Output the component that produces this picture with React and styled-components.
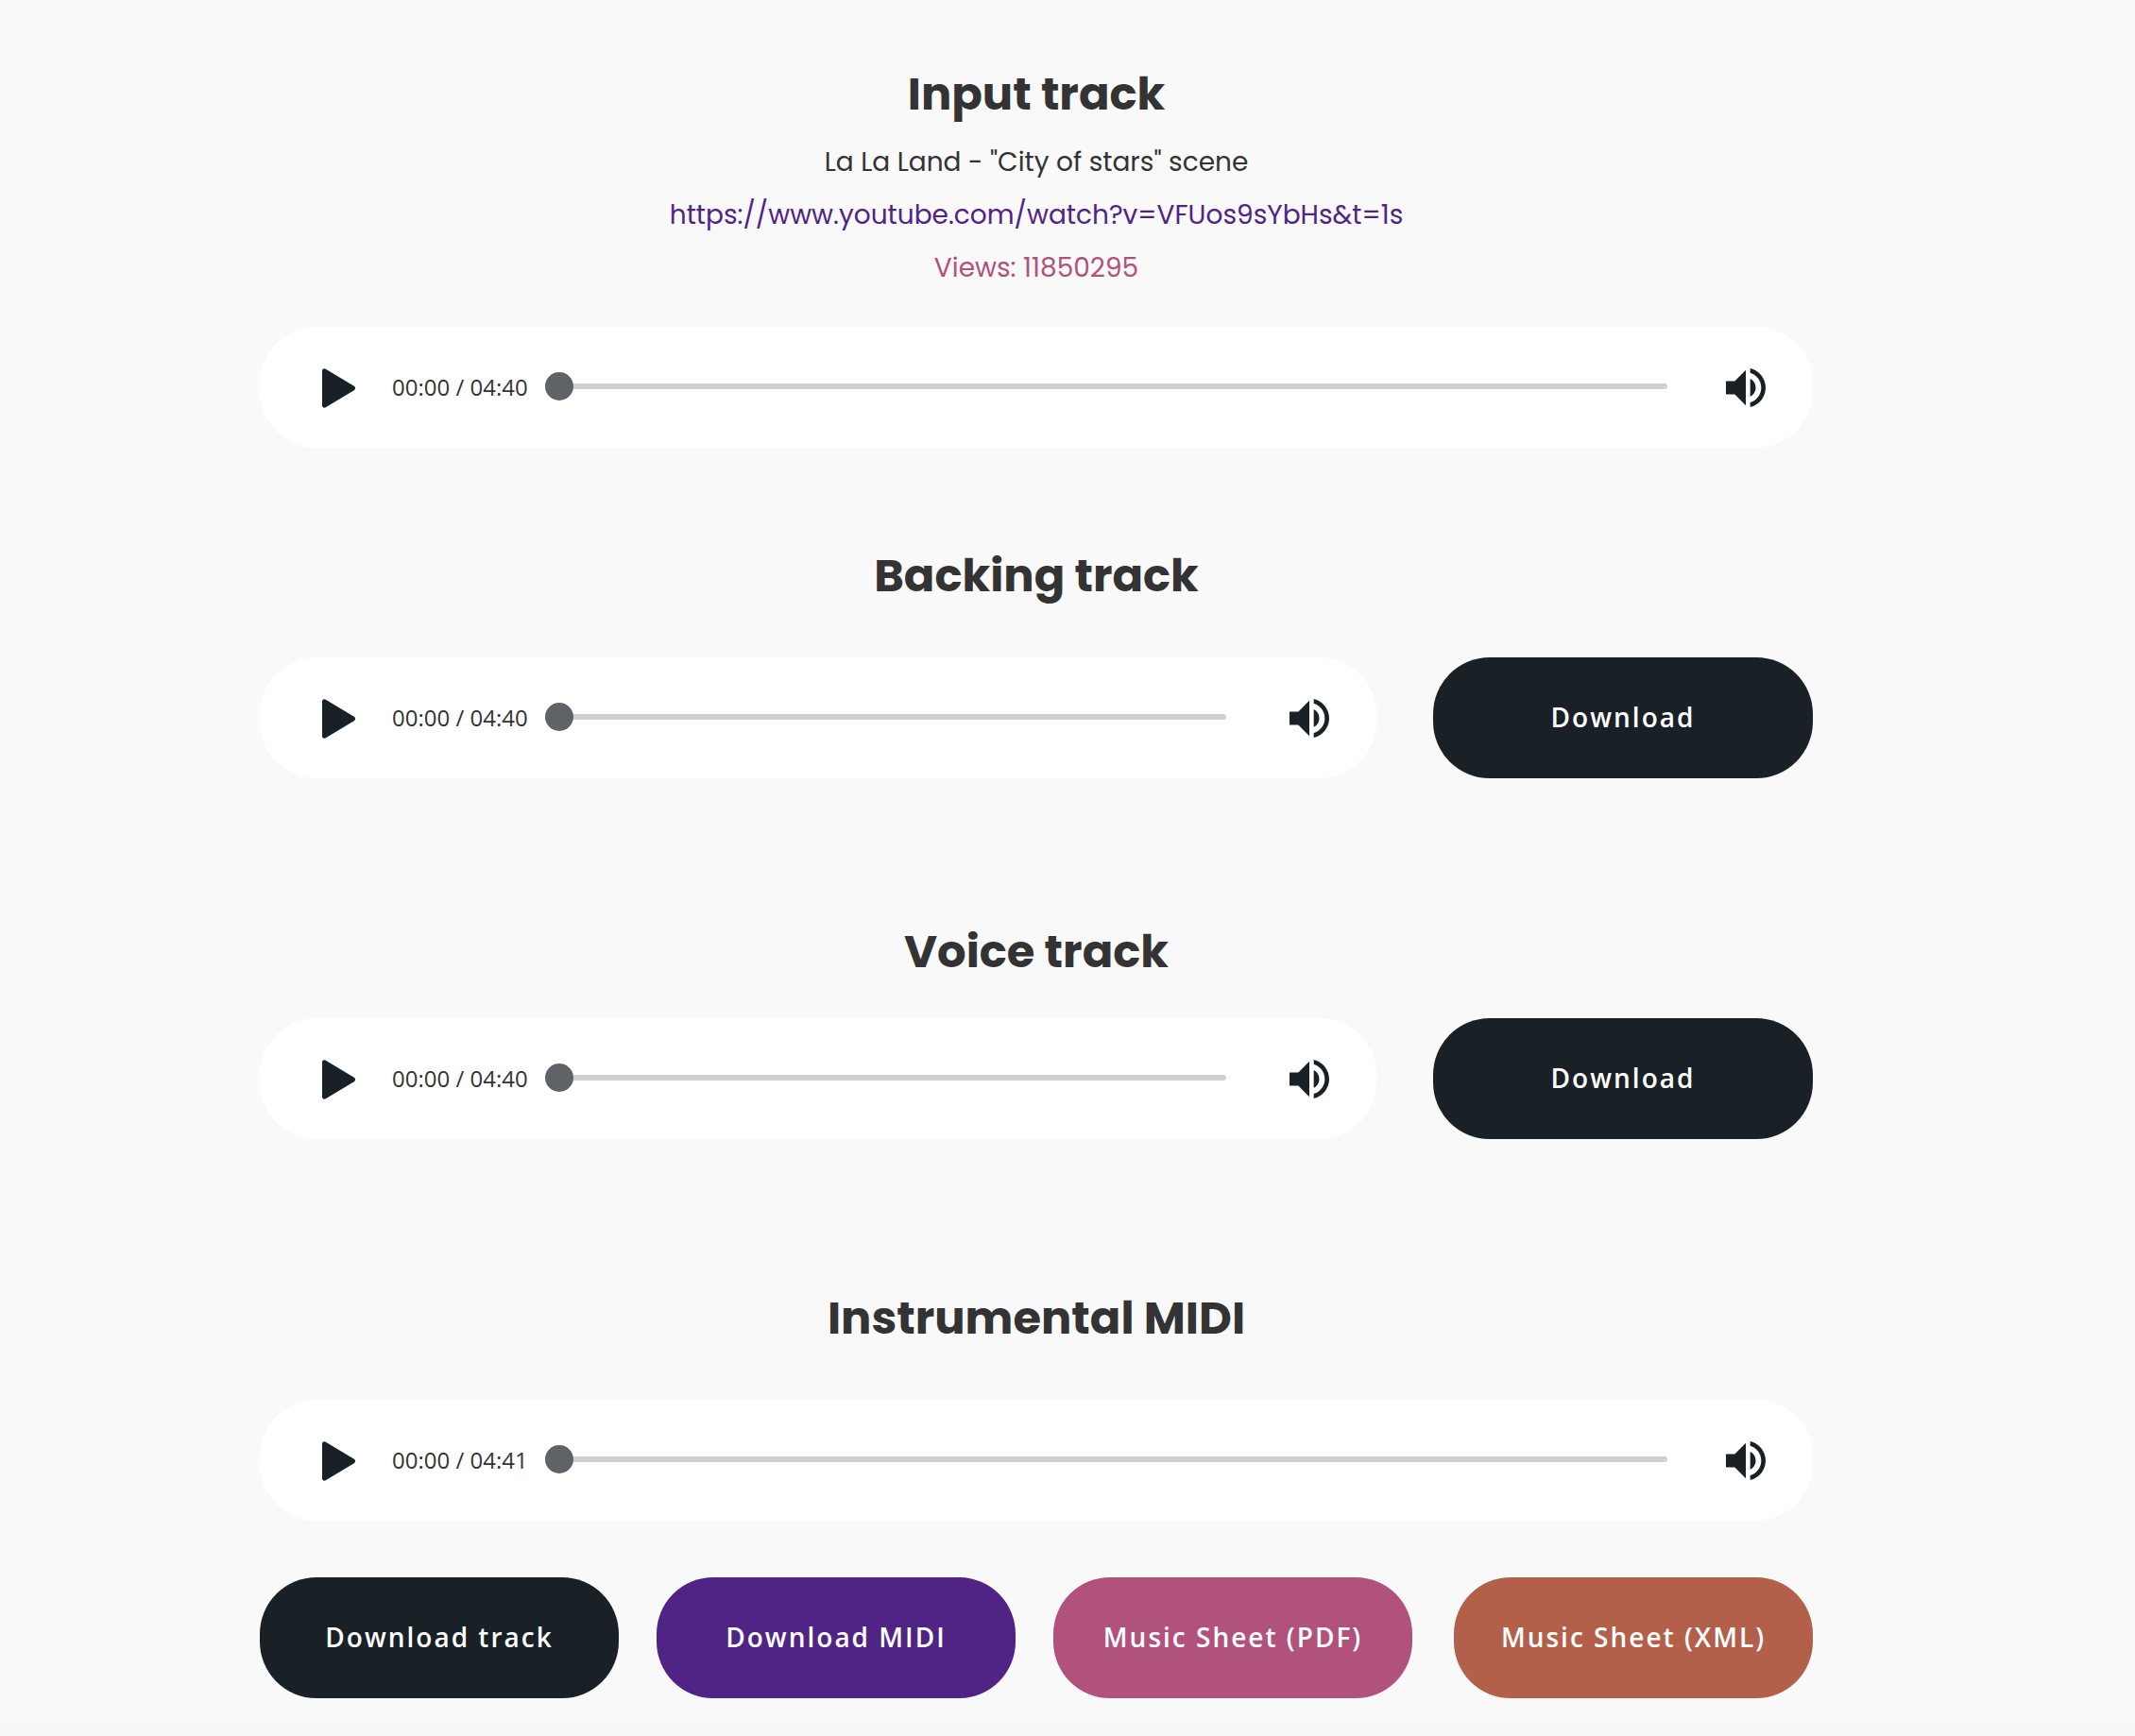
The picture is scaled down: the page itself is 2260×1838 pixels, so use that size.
import React from "react";
import styled, { createGlobalStyle } from "styled-components";

const tracks = [
  {
    id: "input",
    title: "Input track",
    length: "04:40",
    info: {
      name: 'La La Land - "City of stars" scene',
      url: "https://www.youtube.com/watch?v=VFUos9sYbHs&t=1s",
      views: 11850295,
    },
  },
  { id: "backing", title: "Backing track", length: "04:40", download: true },
  { id: "voice", title: "Voice track", length: "04:40", download: true },
  {
    id: "midi",
    title: "Instrumental MIDI",
    length: "04:41",
    actions: [
      { label: "Download track", color: "#192026" },
      { label: "Download MIDI", color: "#502485" },
      { label: "Music Sheet (PDF)", color: "#b0527c" },
      { label: "Music Sheet (XML)", color: "#b2604a" },
    ],
  },
];

function AudioPlayer({ title, length, compact }) {
  const [position, setPosition] = React.useState(0);

  return (
    <PlayerBar>
      <IconButton type="button" aria-label={`Play ${title}`}>
        <svg width="36" height="42" viewBox="0 0 36 42">
          <path
            d="M2.5 2.8L32.5 21L2.5 39.2Z"
            fill="currentColor"
            stroke="currentColor"
            strokeWidth="5"
            strokeLinejoin="round"
          />
        </svg>
      </IconButton>
      <Time>00:00 / {length}</Time>
      <Seek
        type="range"
        min="0"
        max="280"
        value={position}
        aria-label={`${title} position`}
        onChange={(e) => setPosition(Number(e.target.value))}
      />
      <VolumeButton type="button" aria-label={`${title} volume`} $compact={compact}>
        <svg width="42" height="42" viewBox="0 0 24 24">
          <path
            fill="currentColor"
            d="M14.667 0v2.747c3.853 1.146 6.666 4.72 6.666 8.946 0 4.227-2.813 7.787-6.666 8.934v2.76C20 22.173 24 17.4 24 11.693 24 5.987 20 1.213 14.667 0zM18 11.693c0-2.36-1.333-4.386-3.333-5.373v10.707c2-.947 3.333-2.987 3.333-5.334zm-18-4v8h5.333L12 22.36V1.027L5.333 7.693H0z"
          />
        </svg>
      </VolumeButton>
    </PlayerBar>
  );
}

function App() {
  return (
    <>
      <GlobalStyles />
      <Page>
        {tracks.map((track) => (
          <Section key={track.id} $id={track.id}>
            <Title>{track.title}</Title>
            {track.info && (
              <Info>
                <InfoLine>{track.info.name}</InfoLine>
                <InfoLine>
                  <SourceLink href={track.info.url}>{track.info.url}</SourceLink>
                </InfoLine>
                <Views>Views: {track.info.views}</Views>
              </Info>
            )}
            <PlayerRow>
              <AudioPlayer
                title={track.title}
                length={track.length}
                compact={track.download}
              />
              {track.download && (
                <DownloadButton type="button">Download</DownloadButton>
              )}
            </PlayerRow>
            {track.actions && (
              <Actions>
                {track.actions.map((action) => (
                  <ActionButton key={action.label} type="button" $color={action.color}>
                    {action.label}
                  </ActionButton>
                ))}
              </Actions>
            )}
          </Section>
        ))}
      </Page>
      <Footer />
    </>
  );
}

export default App;

const GlobalStyles = createGlobalStyle`
  *, *::before, *::after {
    box-sizing: border-box;
  }

  body {
    margin: 0;
    background: #f9f9f9;
    color: #333;
    font-family: Poppins, Inter, sans-serif;
  }
`;

const sectionSpacing = {
  input: { before: 64, title: 8 },
  backing: { before: 100, title: 50 },
  voice: { before: 148, title: 34 },
  midi: { before: 154, title: 50 },
};

const Page = styled.main`
  padding: 0 341px 27px 275px;
`;

const Title = styled.h2`
  margin: 0;
  font-size: 48px;
  line-height: 72px;
  font-weight: 700;
  text-align: center;
`;

const Section = styled.section`
  padding-top: ${({ $id }) => sectionSpacing[$id].before}px;

  ${Title} {
    margin-bottom: ${({ $id }) => sectionSpacing[$id].title}px;
  }
`;

const Info = styled.div`
  margin-bottom: 34px;
  text-align: center;
`;

const InfoLine = styled.p`
  margin: 0;
  font-size: 28px;
  line-height: 56px;
`;

const Views = styled(InfoLine)`
  color: #b0527c;
`;

const SourceLink = styled.a`
  color: #502485;
  text-decoration: none;
`;

const PlayerRow = styled.div`
  display: flex;
  gap: 60px;
`;

const PlayerBar = styled.div`
  display: flex;
  flex: 1;
  align-items: center;
  min-width: 0;
  height: 128px;
  padding: 0 50px 0 66px;
  border-radius: 60px;
  background: #fff;
`;

const IconButton = styled.button`
  display: flex;
  flex: none;
  padding: 2px 0 0;
  border: 0;
  background: none;
  color: #192026;
  cursor: pointer;
`;

const VolumeButton = styled(IconButton)`
  margin-left: ${({ $compact }) => ($compact ? 67 : 62)}px;
`;

const Time = styled.span`
  flex: none;
  width: 144px;
  margin: 0 18px 0 38px;
  font-family: "Open Sans", "Noto Sans", sans-serif;
  font-size: 24px;
  line-height: 32px;
  white-space: nowrap;
`;

const Seek = styled.input`
  flex: 1;
  min-width: 0;
  height: 30px;
  margin: 0 0 2px;
  appearance: none;
  background: transparent;
  cursor: pointer;

  &::-webkit-slider-runnable-track {
    height: 6px;
    border-radius: 3px;
    background: #d0d0d0;
  }

  &::-webkit-slider-thumb {
    appearance: none;
    width: 30px;
    height: 30px;
    margin-top: -12px;
    border-radius: 50%;
    background: #5f6368;
  }
`;

const Button = styled.button`
  height: 128px;
  padding: 0 20px 2px;
  border: 0;
  border-radius: 60px;
  background: #192026;
  color: #fff;
  font-family: "Open Sans", "Noto Sans", sans-serif;
  font-size: 28px;
  font-weight: 600;
  letter-spacing: 2px;
  white-space: nowrap;
  cursor: pointer;
`;

const DownloadButton = styled(Button)`
  flex: 0 0 402px;
`;

const Actions = styled.div`
  display: flex;
  gap: 40px;
  margin-top: 60px;
`;

const ActionButton = styled(Button)`
  flex: 0 1 380px;
  background: ${({ $color }) => $color};

  &:last-child {
    margin-left: auto;
  }
`;

const Footer = styled.footer`
  height: 13px;
  background: #f8f8f8;
`;
